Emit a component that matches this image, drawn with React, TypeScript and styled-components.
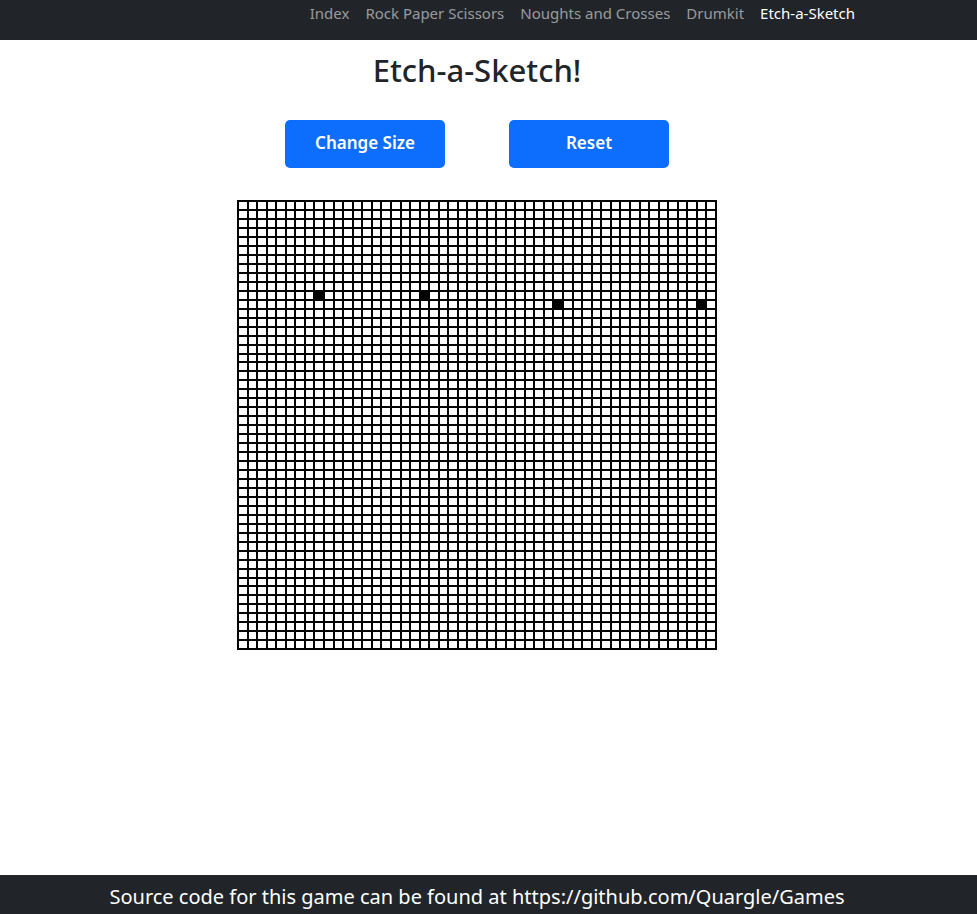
import React from "react"
import styled, { createGlobalStyle } from "styled-components"

const SIZE = 50
const painted = new Set(["10-8", "10-19", "11-33", "11-48"])

const GlobalStyle = createGlobalStyle`
  html, body {
    margin: 0;
    padding: 0;
    background: #fff;
  }
  body {
    font-family: "Noto Sans", "Open Sans", sans-serif;
    color: #212529;
  }
  * {
    box-sizing: border-box;
  }
`

const App = () => {
  const cells = []
  for (let r = 0; r < SIZE; r++) {
    for (let c = 0; c < SIZE; c++) {
      cells.push(<Cell key={`${r}-${c}`} filled={painted.has(`${r}-${c}`)} />)
    }
  }

  return (
    <Page>
      <GlobalStyle />
      <Nav>
        <NavList>
          <NavLink>Index</NavLink>
          <NavLink>Rock Paper Scissors</NavLink>
          <NavLink>Noughts and Crosses</NavLink>
          <NavLink>Drumkit</NavLink>
          <NavLink active>Etch-a-Sketch</NavLink>
        </NavList>
      </Nav>

      <Main>
        <Title>Etch-a-Sketch!</Title>
        <Buttons>
          <Button type="button">Change Size</Button>
          <Button type="button">Reset</Button>
        </Buttons>
        <Board>{cells}</Board>
      </Main>

      <Footer>
        <FooterText>
          Source code for this game can be found at https://github.com/Quargle/Games
        </FooterText>
      </Footer>
    </Page>
  )
}

export default App

const Page = styled.div`
  min-height: 100vh;
  display: flex;
  flex-direction: column;
`

const Nav = styled.nav`
  height: 40px;
  background-color: #212529;
  display: flex;
  justify-content: flex-end;
  padding-right: 114px;
`

const NavList = styled.div`
  display: flex;
  align-items: flex-start;
  padding-top: 2px;
`

const NavLink = styled.a<{ active?: boolean }>`
  padding: 0 8px;
  font-size: 15px;
  line-height: 22px;
  color: ${(p) => (p.active ? "#fff" : "rgba(255, 255, 255, 0.55)")};
  text-decoration: none;
  cursor: pointer;
`

const Main = styled.main`
  flex: 1;
  display: flex;
  flex-direction: column;
  align-items: center;
  padding-right: 23px;
`

const Title = styled.h1`
  margin: 12px 0 0;
  font-size: 31px;
  font-weight: 500;
  line-height: 1.2;
`

const Buttons = styled.div`
  display: flex;
  gap: 64px;
  margin-top: 31px;
`

const Button = styled.button`
  width: 160px;
  height: 48px;
  padding: 0 0 4px;
  border: none;
  border-radius: 5px;
  background-color: #0d6efd;
  color: #fff;
  font-family: "Noto Sans", "Open Sans", sans-serif;
  font-size: 17px;
  font-weight: 600;
  cursor: pointer;
`

const Board = styled.div`
  margin-top: 32px;
  width: 480px;
  height: 450px;
  border: 1px solid #000;
  display: grid;
  grid-template-columns: repeat(${SIZE}, 1fr);
  grid-template-rows: repeat(${SIZE}, 1fr);
`

const Cell = styled.div<{ filled?: boolean }>`
  border: 1px solid #000;
  background-color: ${(p) => (p.filled ? "#000" : "#fff")};
`

const Footer = styled.footer`
  height: 39px;
  background-color: #212529;
  display: flex;
  align-items: center;
  justify-content: center;
  padding: 3px 23px 0 0;
`

const FooterText = styled.span`
  color: #fff;
  font-size: 20px;
`
